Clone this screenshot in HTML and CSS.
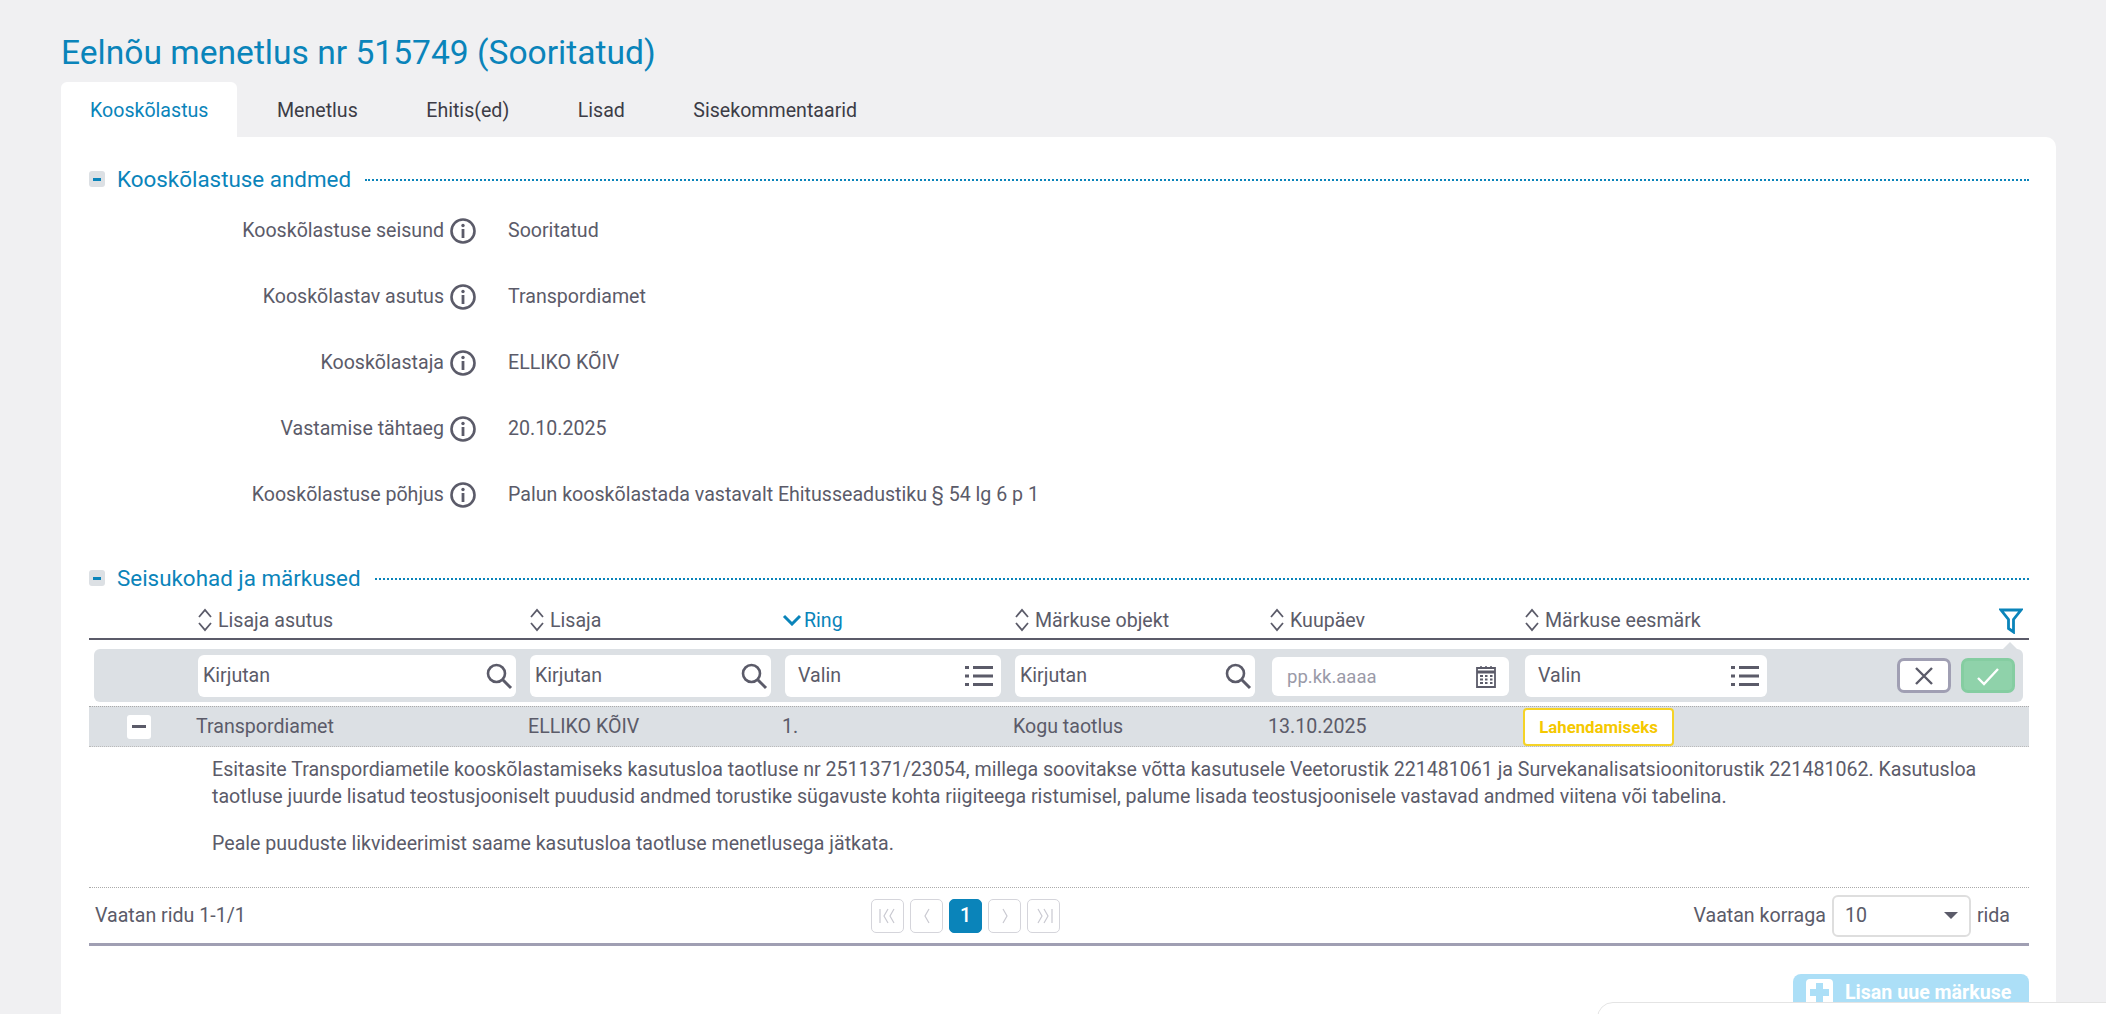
FILE: index.html
```html
<!DOCTYPE html>
<html lang="et">
<head>
<meta charset="utf-8">
<title>Eelnõu menetlus nr 515749</title>
<link rel="stylesheet" href="styles.css">
</head>
<body>
<svg class="defs" width="0" height="0" aria-hidden="true">
  <defs>
    <symbol id="sort" viewBox="0 0 14 24"><path d="M1 9l6-7 6 7M1 15l6 7 6-7" fill="none" stroke="#5b5b69" stroke-width="1.800"/></symbol>
    <symbol id="search" viewBox="0 0 28 28"><circle cx="11.500" cy="11.500" r="8.500" fill="none" stroke="#5b5b69" stroke-width="2.600"/><path d="M17.500 17.500L26 26" stroke="#5b5b69" stroke-width="3" fill="none"/></symbol>
    <symbol id="list" viewBox="0 0 28 22"><path d="M0 2.500h4M8 2.500h20M0 11h4M8 11h20M0 19.500h4M8 19.500h20" stroke="#5b5b69" stroke-width="3" fill="none"/></symbol>
    <symbol id="info" viewBox="0 0 26 26"><circle cx="13" cy="13" r="11.500" fill="none" stroke="#5b5b69" stroke-width="2.600"/><circle cx="13" cy="7.500" r="1.700" fill="#5b5b69"/><path d="M13 11v9" stroke="#5b5b69" stroke-width="2.800"/></symbol>
  </defs>
</svg>
<main class="page">
  <h1 class="title">Eelnõu menetlus nr 515749 (Sooritatud)</h1>
  <nav class="tabs">
    <a class="tab tab-active">Kooskõlastus</a>
    <a class="tab">Menetlus</a>
    <a class="tab">Ehitis(ed)</a>
    <a class="tab">Lisad</a>
    <a class="tab">Sisekommentaarid</a>
  </nav>
  <section class="card">
    <header class="sec-head">
      <span class="toggle"></span>
      <h2 class="sec-title">Kooskõlastuse andmed</h2>
      <span class="sec-line"></span>
    </header>
    <dl class="fields">
      <div class="field"><dt class="field-label">Kooskõlastuse seisund<svg class="ico-info"><use href="#info"/></svg></dt><dd class="field-value">Sooritatud</dd></div>
      <div class="field"><dt class="field-label">Kooskõlastav asutus<svg class="ico-info"><use href="#info"/></svg></dt><dd class="field-value">Transpordiamet</dd></div>
      <div class="field"><dt class="field-label">Kooskõlastaja<svg class="ico-info"><use href="#info"/></svg></dt><dd class="field-value">ELLIKO KÕIV</dd></div>
      <div class="field"><dt class="field-label">Vastamise tähtaeg<svg class="ico-info"><use href="#info"/></svg></dt><dd class="field-value">20.10.2025</dd></div>
      <div class="field"><dt class="field-label">Kooskõlastuse põhjus<svg class="ico-info"><use href="#info"/></svg></dt><dd class="field-value">Palun kooskõlastada vastavalt Ehitusseadustiku § 54 lg 6 p 1</dd></div>
    </dl>
    <header class="sec-head sec-head-2">
      <span class="toggle"></span>
      <h2 class="sec-title">Seisukohad ja märkused</h2>
      <span class="sec-line"></span>
    </header>
    <div class="table">
      <div class="cols head">
        <span></span>
        <span class="th"><svg class="ico-sort"><use href="#sort"/></svg>Lisaja asutus</span>
        <span class="th"><svg class="ico-sort"><use href="#sort"/></svg>Lisaja</span>
        <span class="th th-active"><svg class="ico-chev" viewBox="0 0 20 12"><path d="M2 2l8 8 8-8" fill="none" stroke="#0a84ba" stroke-width="3"/></svg>Ring</span>
        <span class="th"><svg class="ico-sort"><use href="#sort"/></svg>Märkuse objekt</span>
        <span class="th"><svg class="ico-sort"><use href="#sort"/></svg>Kuupäev</span>
        <span class="th"><svg class="ico-sort"><use href="#sort"/></svg>Märkuse eesmärk</span>
        <span class="th-filter"><svg class="ico-filter" viewBox="0 0 24 26"><path d="M2 2h20l-7.500 9.500V24l-5-3.500v-9z" fill="none" stroke="#0a84ba" stroke-width="2.800"/></svg></span>
      </div>
      <div class="filters">
        <div class="inp inp-1">Kirjutan<svg class="ico-search"><use href="#search"/></svg></div>
        <div class="inp inp-2">Kirjutan<svg class="ico-search"><use href="#search"/></svg></div>
        <div class="inp inp-3">Valin<svg class="ico-list"><use href="#list"/></svg></div>
        <div class="inp inp-4">Kirjutan<svg class="ico-search"><use href="#search"/></svg></div>
        <div class="inp inp-5">pp.kk.aaaa<svg class="ico-cal" viewBox="0 0 20 22"><path d="M1 2h18v19H1z" fill="none" stroke="#5b5b69" stroke-width="1.800"/><path d="M1 6h18" stroke="#5b5b69" stroke-width="3"/><path d="M4 10h3M9 10h2.500M14 10h2.500M4 13.500h3M9 13.500h2.500M14 13.500h2.500M4 17h3M9 17h2.500M14 17h2.500" stroke="#5b5b69" stroke-width="2"/><path d="M5 0v3M10 0v3M15 0v3" stroke="#5b5b69" stroke-width="1.500"/></svg></div>
        <div class="inp inp-6">Valin<svg class="ico-list"><use href="#list"/></svg></div>
        <div class="filter-btns">
          <button class="btn-x" type="button"><svg viewBox="0 0 20 20" width="20" height="20"><path d="M2 2l16 16M18 2L2 18" stroke="#5b5b69" stroke-width="2.400"/></svg></button>
          <button class="btn-ok" type="button"><svg viewBox="0 0 24 20" width="24" height="20"><path d="M2 12l6 6L22 3" fill="none" stroke="#fff" stroke-width="2.400"/></svg></button>
        </div>
        <span class="filter-notch"></span>
      </div>
      <div class="cols row">
        <span class="row-toggle-cell"><span class="row-toggle"></span></span>
        <span>Transpordiamet</span>
        <span>ELLIKO KÕIV</span>
        <span>1.</span>
        <span>Kogu taotlus</span>
        <span>13.10.2025</span>
        <span><span class="badge">Lahendamiseks</span></span>
      </div>
      <div class="detail">
        <p class="detail-p">Esitasite Transpordiametile kooskõlastamiseks kasutusloa taotluse nr 2511371/23054, millega soovitakse võtta kasutusele Veetorustik 221481061 ja Survekanalisatsioonitorustik 221481062. Kasutusloa taotluse juurde lisatud teostusjooniselt puudusid andmed torustike sügavuste kohta riigiteega ristumisel, palume lisada teostusjoonisele vastavad andmed viitena või tabelina.</p>
        <p class="detail-p">Peale puuduste likvideerimist saame kasutusloa taotluse menetlusega jätkata.</p>
      </div>
      <footer class="pager">
        <span class="pager-info">Vaatan ridu 1-1/1</span>
        <div class="pages">
          <span class="pg"><svg viewBox="0 0 20 16" width="20" height="16"><path d="M2 1v14M10 1L6 8l4 7M16 1l-4 7 4 7" fill="none" stroke="#c9c9d1" stroke-width="1.200"/></svg></span>
          <span class="pg"><svg viewBox="0 0 10 16" width="10" height="16"><path d="M7 1L3 8l4 7" fill="none" stroke="#c9c9d1" stroke-width="1.200"/></svg></span>
          <span class="pg pg-on">1</span>
          <span class="pg"><svg viewBox="0 0 10 16" width="10" height="16"><path d="M3 1l4 7-4 7" fill="none" stroke="#c9c9d1" stroke-width="1.200"/></svg></span>
          <span class="pg"><svg viewBox="0 0 20 16" width="20" height="16"><path d="M18 1v14M10 1l4 7-4 7M4 1l4 7-4 7" fill="none" stroke="#c9c9d1" stroke-width="1.200"/></svg></span>
        </div>
        <div class="perpage">Vaatan korraga<span class="perpage-sel">10<span class="caret"></span></span>rida</div>
      </footer>
    </div>
    <div class="actions">
      <button class="btn-add" type="button"><span class="plus"></span>Lisan uue märkuse</button>
    </div>
  </section>
</main>
<div class="corner-box"></div>
</body>
</html>
```
FILE: styles.css
```css
* { box-sizing: border-box; }
html, body { margin: 0; height: 100%; overflow: hidden; }
body { background: #f0f0f2; font-family: Roboto, "Liberation Sans", sans-serif; color: #5b5b69; font-size: 19.6px; }
.defs { position: absolute; }
.page { padding: 30px 50px 0 61px; }
.title { margin: 0; font-size: 33.6px; line-height: 46px; font-weight: 400; color: #0a84ba; }
.tabs { display: flex; gap: 10.5px; margin-top: 6px; height: 55px; }
.tab { display: flex; align-items: center; padding: 2px 29px 0; font-size: 19.6px; color: #3c3c46; }
.tab-active { background: #fff; color: #0a84ba; border-radius: 6px 6px 0 0; }
.card { background: #fff; border-radius: 0 10px 0 0; padding: 28px 27px 0 28px; height: 900px; }
.sec-head { display: flex; align-items: center; height: 28px; }
.sec-head-2 { margin-top: 31px; }
.toggle { width: 16px; height: 16px; background: #dce0e4; border-radius: 3px; position: relative; flex: none; }
.toggle::after { content: ""; position: absolute; left: 4px; right: 4px; top: 7px; height: 3px; background: #0a84ba; }
.sec-title { margin: 0 14px 0 12px; font-size: 22.4px; font-weight: 400; color: #0a84ba; }
.sec-line { flex: 1; border-top: 2px dotted #0a84ba; margin-top: 2px; }
.fields { margin: 0; padding-top: 10px; }
.field { display: flex; height: 66px; align-items: flex-start; padding-top: 11px; }
.field-label { width: 387px; display: flex; justify-content: flex-end; align-items: center; height: 34px; line-height: 26px; }
.field-value { margin: 0 0 0 32px; line-height: 34px; }
.ico-info { width: 26px; height: 26px; margin-left: 6px; flex: none; }
.cols { display: grid; grid-template-columns: 107px 332px 254px 231px 255px 255px 1fr; align-items: center; }
.head { height: 48px; padding-top: 10px; border-bottom: 2px solid #5b5b69; position: relative; }
.th { display: flex; align-items: center; gap: 6px; }
.th-active { color: #0a84ba; gap: 2px; }
.ico-sort { width: 14px; height: 24px; flex: none; margin-left: 2px; }
.ico-chev { width: 20px; height: 12px; flex: none; }
.th-filter { position: absolute; right: 6px; top: 16px; }
.ico-filter { width: 24px; height: 26px; display: block; }
.filters { position: relative; display: flex; align-items: center; background: #dce0e4; margin: 9px 6px 4px 5px; height: 53px; border-radius: 6px; padding: 0 8px 0 104px; }
.inp { height: 42px; background: #fff; border-radius: 6px; display: flex; align-items: center; justify-content: space-between; padding: 0 3px 0 5px; flex: none; }
.inp-1 { width: 318px; }
.inp-2 { width: 241px; margin-left: 14px; }
.inp-3 { width: 216px; margin-left: 14px; padding-left: 13px; padding-right: 8px; }
.inp-4 { width: 240px; margin-left: 14px; }
.inp-5 { width: 237px; margin-left: 17px; padding-left: 15px; padding-right: 13px; color: #9a9aa8; height: 39px; margin-top: 2px; font-size: 18.5px; }
.inp-6 { width: 242px; margin-left: 16px; padding-left: 13px; padding-right: 8px; }
.ico-search { width: 28px; height: 28px; }
.ico-list { width: 28px; height: 22px; }
.ico-cal { width: 20px; height: 22px; }
.filter-btns { margin-left: auto; display: flex; gap: 10px; }
.btn-x, .btn-ok { width: 54px; height: 35px; border-radius: 7px; display: flex; align-items: center; justify-content: center; padding: 0; }
.btn-x { background: #fff; border: 3px solid #a09fb3; }
.btn-ok { background: #8fd2aa; border: 3px solid #85cda1; }
.filter-notch { position: absolute; right: 5px; top: -7px; width: 0; height: 0; border: 8px solid transparent; border-top: 0; border-bottom-color: #dce0e4; }
.row { background: #dce0e4; height: 41px; border-top: 1px dotted #aaa; border-bottom: 1px dotted #bbb; }
.row-toggle-cell { padding-left: 38px; }
.row-toggle { display: block; width: 24px; height: 24px; background: #fff; border-radius: 3px; position: relative; }
.row-toggle::after { content: ""; position: absolute; left: 5px; right: 5px; top: 10px; height: 3px; background: #5b5b69; }
.badge { display: flex; align-items: center; justify-content: center; width: 151px; height: 38px; border: 2px solid #f5d327; background: #fff; border-radius: 4px; color: #f5c800; font-size: 16.8px; font-weight: 700; }
.detail { padding: 9px 0 0 123px; }
.detail-p { margin: 0 0 20px; line-height: 27px; }
.pager { display: flex; align-items: center; justify-content: space-between; height: 59px; border-top: 1px dotted #aaa; border-bottom: 3px solid #a09fb3; margin-top: 30px; padding: 0 19px 0 6px; position: relative; }
.pages { display: flex; gap: 6px; position: absolute; left: 782px; }
.pg { width: 33px; height: 34px; border: 1px solid #d5d5db; border-radius: 5px; display: flex; align-items: center; justify-content: center; }
.pg-on { background: #0a84ba; border-color: #0a84ba; color: #fff; font-size: 19.6px; font-weight: 500; }
.perpage { display: flex; align-items: center; gap: 6px; }
.perpage-sel { width: 139px; height: 42px; border: 2px solid #dedede; border-radius: 6px; display: flex; align-items: center; justify-content: space-between; padding: 0 11px 0 11px; }
.caret { border: 7px solid transparent; border-top: 7px solid #5b5b69; border-bottom: 0; }
.actions { display: flex; justify-content: flex-end; margin-top: 28px; }
.btn-add { width: 236px; height: 50px; background: #acdff7; border: 0; border-radius: 8px 8px 0 0; color: #fff; font: 700 19.6px/27px Roboto, sans-serif; display: flex; align-items: flex-start; padding: 5px 0 0 13px; gap: 12px; }
.plus { width: 27px; height: 27px; background: #fff; border-radius: 4px; position: relative; flex: none; }
.plus::before { content: ""; position: absolute; left: 10px; top: 4px; width: 7px; height: 19px; background: #acdff7; }
.plus::after { content: ""; position: absolute; left: 4px; top: 10px; width: 19px; height: 7px; background: #acdff7; }
.corner-box { position: fixed; left: 1597px; top: 1002px; width: 600px; height: 60px; background: #fff; border: 1px solid #e4e4e4; border-radius: 16px 0 0 0; }
```
